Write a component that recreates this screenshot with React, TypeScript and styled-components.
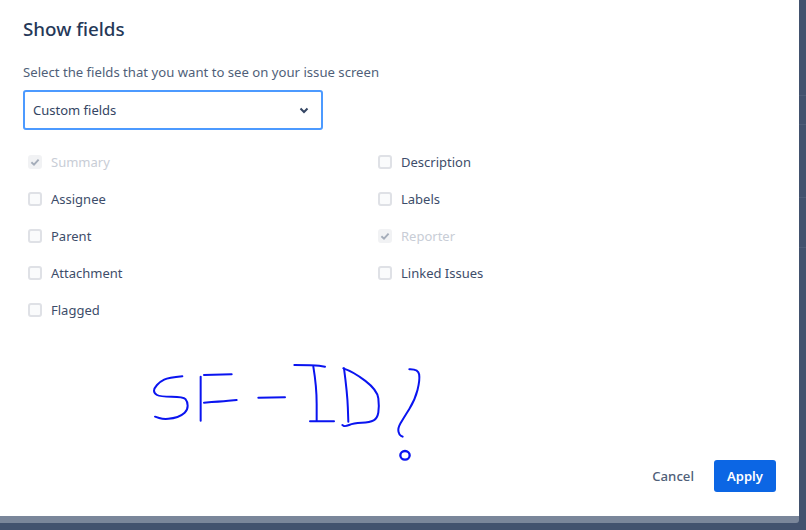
import React from "react";
import styled, { createGlobalStyle } from "styled-components";

const Global = createGlobalStyle`
  html, body { margin: 0; padding: 0; width: 806px; height: 530px; overflow: hidden; background: #42526e; }
  * { box-sizing: border-box; }
`;

const Page = styled.div`
  display: flex;
  width: 806px;
  height: 530px;
  font-family: "Noto Sans", "Open Sans", sans-serif;
  font-size: 13px;
  color: #172b4d;
`;

const Left = styled.div`
  width: 799px;
  height: 523px;
  display: flex;
  flex-direction: column;
  background: #7a869a;
  border-bottom-right-radius: 3px;
  flex: none;
`;

const Modal = styled.main`
  width: 799px;
  height: 516px;
  background: #fff;
  padding: 15px 23px 24px 23px;
  display: flex;
  flex-direction: column;
  flex: none;
  & > * { flex: none; }
`;

const Title = styled.h1`
  margin: 0;
  font-size: 18.8px;
  line-height: 28px;
  font-weight: 500;
  color: #253858;
`;

const Hint = styled.p`
  margin: 21px 0 0 0;
  font-size: 13.15px;
  line-height: 16px;
  color: #505f79;
`;

const Select = styled.div`
  margin-top: 10px;
  width: 300px;
  height: 40px;
  border: 2px solid #4c9aff;
  border-radius: 3px;
  display: flex;
  align-items: center;
  justify-content: space-between;
  padding: 0 11px 0 8px;
  font-size: 13px;
  color: #344563;
`;

const Fields = styled.div`
  margin-top: 13px;
  margin-left: 5px;
  display: grid;
  grid-template-columns: 350px 1fr;
  grid-auto-rows: 37px;
`;

const Field = styled.label<{ $off?: boolean }>`
  display: flex;
  align-items: center;
  gap: 9px;
  height: 37px;
  font-size: 13px;
  color: ${(p) => (p.$off ? "#c8cdd6" : "#3d4d6a")};
`;

const Box = styled.span<{ $off?: boolean }>`
  width: 14px;
  height: 14px;
  border-radius: 3px;
  flex: none;
  display: flex;
  align-items: center;
  justify-content: center;
  background: ${(p) => (p.$off ? "#f1f2f4" : "#fafbfc")};
  border: 2px solid ${(p) => (p.$off ? "#f1f2f4" : "#dfe1e6")};
`;

const Sketch = styled.svg`
  display: block;
  width: 300px;
  height: 120px;
  margin: 22px 0 -12px 117px;
`;

const Footer = styled.footer`
  margin-top: auto;
  display: flex;
  justify-content: flex-end;
  align-items: center;
  gap: 20px;
`;

const Cancel = styled.button`
  border: 0;
  background: transparent;
  padding: 0;
  font: inherit;
  font-size: 13.2px;
  font-weight: 500;
  color: #505f79;
`;

const Apply = styled.button`
  width: 62px;
  height: 32px;
  border: 0;
  border-radius: 3px;
  background: #0c66e4;
  color: #fff;
  font: inherit;
  font-size: 13px;
  font-weight: 600;
`;

const Rail = styled.aside`
  flex: 1;
  display: flex;
  flex-direction: column;
  height: 530px;
  background: #42526e;
`;

const RailRow = styled.div<{ $h: number }>`
  height: ${(p) => p.$h}px;
  border-bottom: 1px solid #4e5d78;
  flex: none;
`;

const Tick = () => (
  <svg width="10" height="10" viewBox="0 0 10 10" aria-hidden="true">
    <path d="M1.4 5.2 L4 7.6 L8.6 2.6" fill="none" stroke="#a5adba" strokeWidth="1.9" />
  </svg>
);

const left = [
  { label: "Summary", off: true },
  { label: "Description" },
  { label: "Assignee" },
  { label: "Labels" },
  { label: "Parent" },
  { label: "Reporter", off: true },
  { label: "Attachment" },
  { label: "Linked Issues" },
  { label: "Flagged" },
];

const strokes: number[][][] = [
  [[127,79],[85,83],[60,95],[42,115],[42,130],[60,140],[130,140],[143,155],[143,180],[125,197],[100,205],[70,208],[45,200]],
  [[182,80],[182,212]],
  [[192,75],[275,73]],
  [[192,158],[240,155],[290,150]],
  [[355,143],[435,142]],
  [[463,45],[520,45],[555,50]],
  [[520,50],[530,110],[530,213]],
  [[510,214],[582,214]],
  [[612,55],[622,130],[625,215]],
  [[610,55],[640,65],[712,120],[718,170],[712,205],[690,217],[640,220],[615,230],[607,225]],
  [[808,58],[835,57],[840,90],[825,150],[790,205],[773,235],[778,255],[788,260]],
];

// Rounds a hand-drawn polyline by curving through the midpoints of its segments.
const smooth = (pts: number[][]) => {
  let d = `M${pts[0][0]} ${pts[0][1]}`;
  for (let i = 1; i < pts.length - 1; i++) {
    const mx = (pts[i][0] + pts[i + 1][0]) / 2;
    const my = (pts[i][1] + pts[i + 1][1]) / 2;
    d += ` Q${pts[i][0]} ${pts[i][1]} ${mx} ${my}`;
  }
  const last = pts[pts.length - 1];
  return `${d} L${last[0]} ${last[1]}`;
};

export default function App() {
  return (
    <Page>
      <Global />
      <Left>
        <Modal>
          <Title>Show fields</Title>
          <Hint>Select the fields that you want to see on your issue screen</Hint>
          <Select>
            <span>Custom fields</span>
            <svg width="12" height="12" viewBox="0 0 12 12" aria-hidden="true">
              <path d="M2.5 4.5 L6 8 L9.5 4.5" fill="none" stroke="#344563" strokeWidth="2" />
            </svg>
          </Select>
          <Fields>
            {left.map((f) => (
              <Field key={f.label} $off={f.off}>
                <Box $off={f.off}>{f.off && <Tick />}</Box>
                {f.label}
              </Field>
            ))}
          </Fields>
          <Sketch viewBox="0 0 900 360" aria-hidden="true">
            <g fill="none" stroke="#0a14f0" strokeWidth="6" strokeLinecap="round" strokeLinejoin="round">
              {strokes.map((s, i) => (
                <path key={i} d={smooth(s)} />
              ))}
              <ellipse cx="795" cy="316" rx="14" ry="13" strokeWidth="7" />
            </g>
          </Sketch>
          <Footer>
            <Cancel>Cancel</Cancel>
            <Apply>Apply</Apply>
          </Footer>
        </Modal>
      </Left>
      <Rail>
        <RailRow $h={96} />
        <RailRow $h={29} />
        <RailRow $h={73} />
        <RailRow $h={50} />
      </Rail>
    </Page>
  );
}
